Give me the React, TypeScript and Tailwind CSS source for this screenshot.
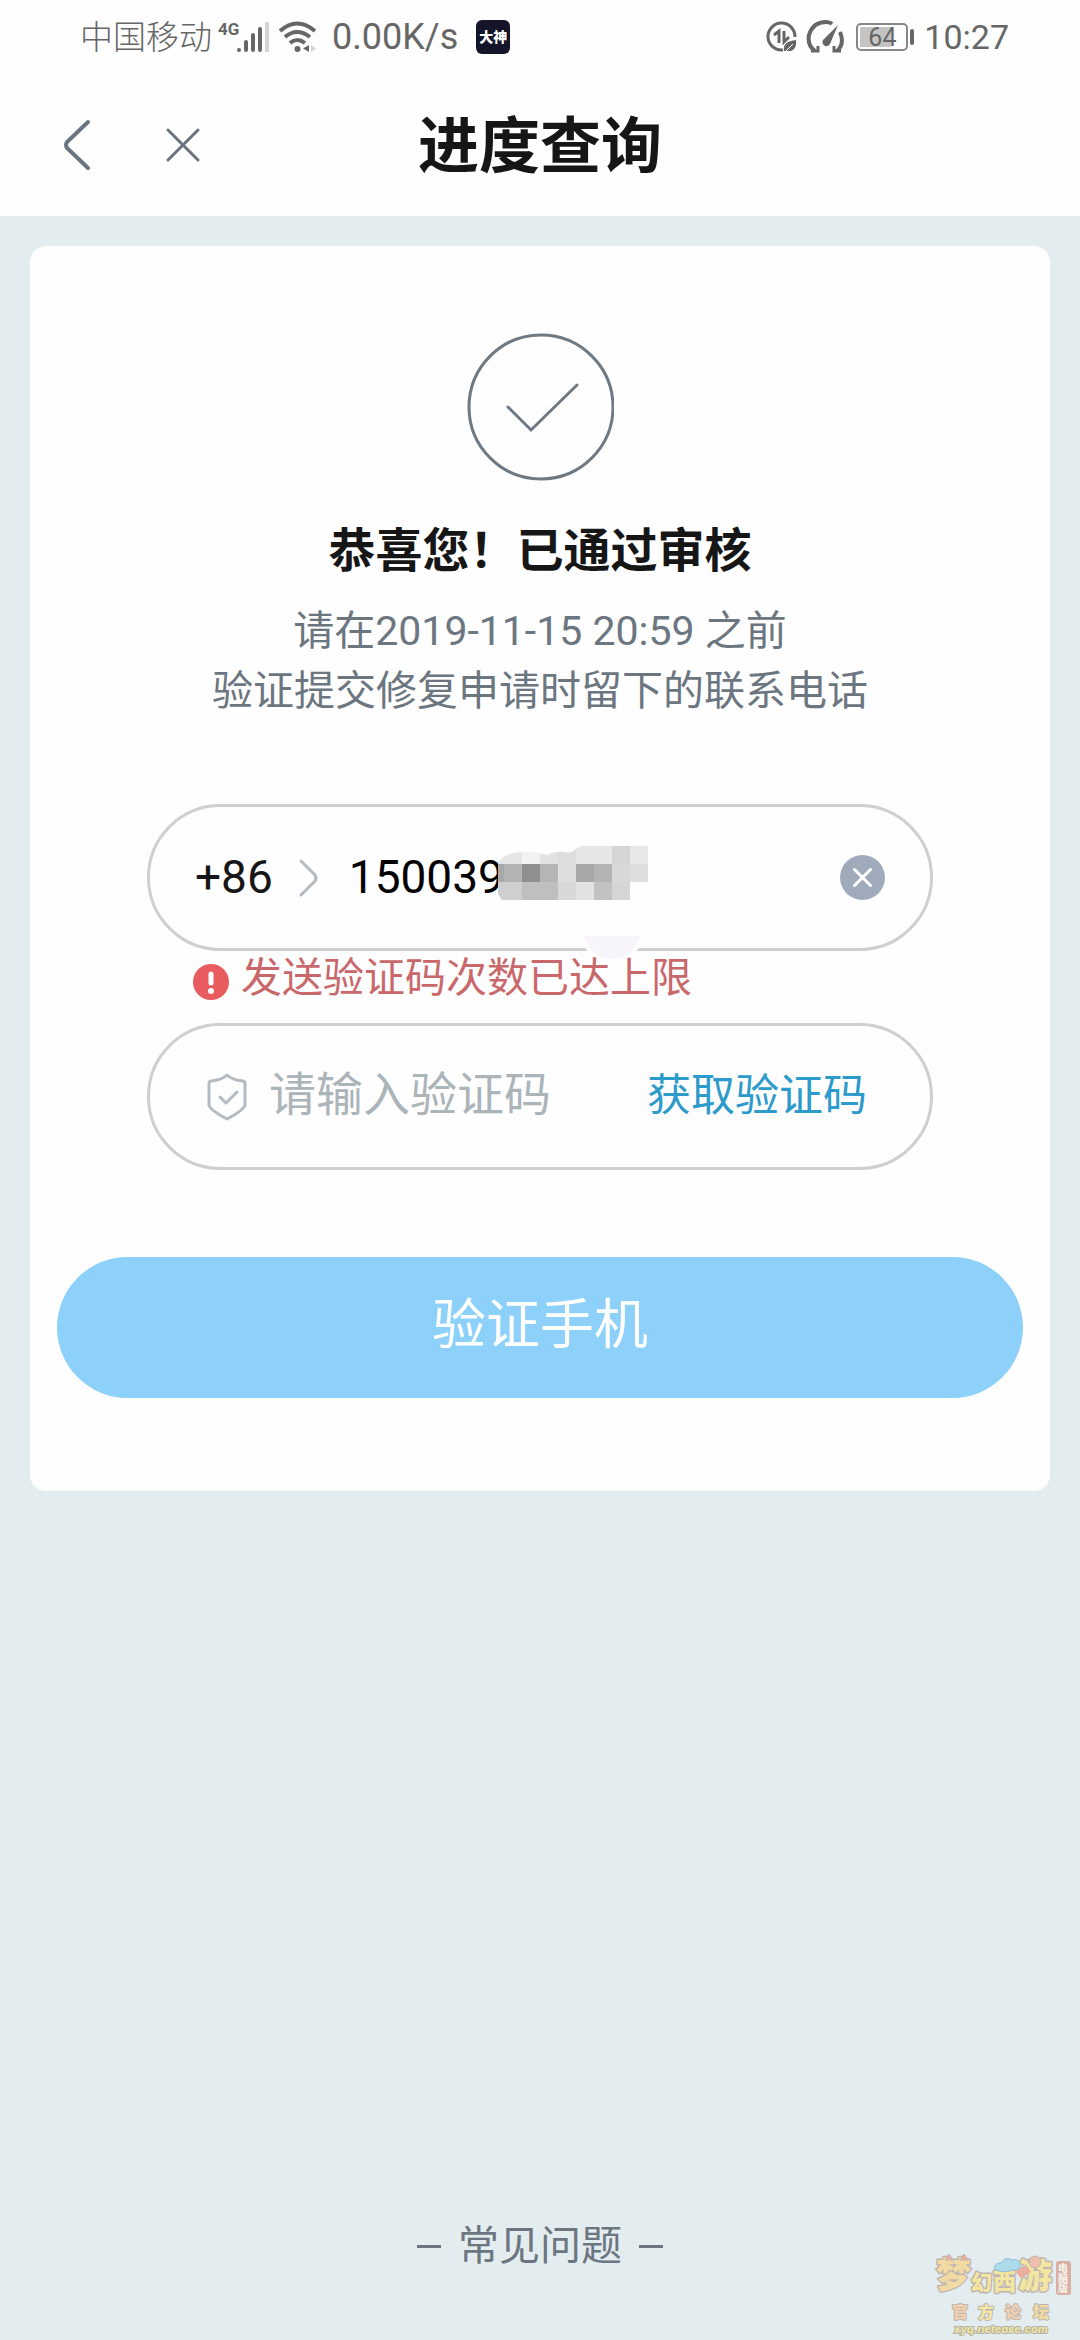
import React, { useState } from 'react';

const MOSAIC = [
  ['#e6e6e6', '#e6e6e6', '#f2f2f2', '#e2e2e2', '#dddddd', '#e6e6e6', '#e6e6e6', '#d5d5d5', '#e8e8e8'],
  ['#a9a9a9', '#b4b4b4', '#8f8f8f', '#b5b5b5', '#dddddd', '#a8a8a8', '#b4b4b4', '#d8d8d8', '#dedede'],
  ['#cfcfcf', '#cfcfcf', '#bfbfbf', '#bfbfbf', '#d8d8d8', '#e2e2e2', '#c2c2c2', '#d5d5d5', 'none'],
];

const StatusBar: React.FC = () => (
  <div className="flex h-[74px] items-center justify-between pl-20 pr-[71px] text-[#666]">
    <div className="flex items-center">
      <span className="text-[33px] font-light leading-none">中国移动</span>
      <svg width="54" height="36" viewBox="0 0 54 36" className="ml-[6px]">
        <text x="0" y="16" fontSize="17" fontWeight="700" fontFamily="Roboto, sans-serif" fill="#666">4G</text>
        <circle cx="21" cy="31" r="2" fill="#666" />
        <path d="M28 23v8M35 16v15M42 10v21" stroke="#666" strokeWidth="4" strokeLinecap="round" />
        <path d="M49 3v30" stroke="#d4d4d4" strokeWidth="4" />
      </svg>
      <svg width="40" height="36" viewBox="0 0 40 36" className="ml-[6px]" fill="none" stroke="#666" strokeWidth="4">
        <path d="M2 12Q19 -3 37 12" />
        <path d="M7 18Q19 8 32 18" />
        <path d="M12 24Q19 18 27 24" />
        <circle cx="19.500" cy="30" r="3" fill="#666" stroke="none" />
        <path d="M31 26v7l-6-3.500z" fill="#666" stroke="none" />
        <path d="M33 26v7l5-3.500z" fill="#d4d4d4" stroke="none" />
      </svg>
      <span className="ml-[14px] text-[36px] leading-none">0.00K/s</span>
      <span className="ml-[18px] flex size-[34px] items-center justify-center rounded-md bg-[#15152a] text-[14px] font-black leading-none text-white">
        大神
      </span>
    </div>
    <div className="flex items-center">
      <svg width="32" height="34" viewBox="0 0 32 34" fill="none" stroke="#666" strokeWidth="3">
        <path d="M17 30A13.500 13.500 0 1 1 29 17" />
        <path d="M8 15l5-4v12M18 11v11l5-5" strokeWidth="3" />
        <path d="M18 31c-1-7 3-10 12-11c1 8-3 12-9 11z" fill="#666" stroke="none" />
        <path d="M18 33l9-9" stroke="#fff" strokeWidth="1" />
      </svg>
      <svg width="40" height="34" viewBox="0 0 40 34" className="ml-2" fill="none" stroke="#666" strokeWidth="4">
        <path d="M9 31Q1 25 3 15Q7 2 20 2Q24 2 26 4" />
        <path d="M34 12Q39 24 31 31" />
        <path d="M5 31h7v-5M35 31h-7v-5" strokeWidth="3" />
        <path d="M32 5L24 24a4 4 0 1 1-6-5z" fill="#666" stroke="none" />
      </svg>
      <span className="ml-[10px] flex h-[28px] w-[52px] items-center rounded-[5px] border-2 border-[#888] p-[2px]">
        <span className="flex h-full w-[31px] items-center bg-[#c4c4c4] pl-2 text-[25px] leading-none">64</span>
      </span>
      <span className="ml-[2px] h-4 w-1 rounded-sm bg-[#666]" />
      <span className="ml-[10px] text-[34px] leading-none">10:27</span>
    </div>
  </div>
);

const Header: React.FC = () => (
  <header className="grid h-[142px] grid-cols-[1fr_auto_1fr] items-center">
    <div className="flex items-center">
      <button aria-label="返回" className="ml-[60px]">
        <svg width="34" height="54" viewBox="0 0 34 54" fill="none" stroke="#6a747e" strokeWidth="4" strokeLinecap="round">
          <path d="M28 4L7 24Q5 27 7 30L28 50" />
        </svg>
      </button>
      <button aria-label="关闭" className="ml-[70px]">
        <svg width="38" height="38" viewBox="0 0 38 38" stroke="#6a747e" strokeWidth="3" strokeLinecap="round">
          <path d="M4 4L34 34M34 4L4 34" />
        </svg>
      </button>
    </div>
    <h1 className="pt-1 text-[61px] font-bold leading-none text-[#161616]">进度查询</h1>
  </header>
);

// forum logo in the bottom right corner
const Watermark: React.FC = () => (
  <svg
    width="140"
    height="100"
    viewBox="0 -16 140 100"
    className="absolute bottom-1 right-2 opacity-80"
    fontFamily="'Noto Sans CJK SC', sans-serif"
    fontWeight="900"
    strokeLinejoin="round"
  >
    <g fill="#f6e58e" stroke="#b9a9a0" strokeWidth="3" paintOrder="stroke">
      <text x="4" y="36" fontSize="35" fill="#f6d890">梦</text>
      <text x="39" y="38" fontSize="21">幻</text>
      <text x="61" y="38" fontSize="23">西</text>
      <text x="86" y="36" fontSize="34">游</text>
    </g>
    <path d="M13 8l4-6 4 6zM28 8l4-6 4 6z" fill="#eda08c" stroke="#b9a9a0" />
    <path d="M62 17q0-6 7-6q4-7 11-3q8-2 8 5q0 6-7 5q-10 4-19-1z" fill="#9fd8ec" stroke="#7fb4cc" />
    <circle cx="103" cy="10" r="6" fill="#f0b49b" stroke="#b9a9a0" />
    <path d="M84 19l11-5 4 6-11 6z" fill="#eda08c" />
    <rect x="124" y="9" width="15" height="34" rx="3" fill="#d9a08e" />
    <text x="131" y="11" fontSize="10" fill="#f8f0e8" style={{ writingMode: 'vertical-rl' }}>电脑版</text>
    <g fontSize="16" stroke="#b5aba2" strokeWidth="2" paintOrder="stroke">
      <text x="20" y="66" fill="#f6c9a0">官</text>
      <text x="46" y="66" fill="#f6e58e">方</text>
      <text x="73" y="66" fill="#f6c9a0">论</text>
      <text x="101" y="66" fill="#f6d890">坛</text>
    </g>
    <text
      x="22"
      y="81"
      fontSize="11"
      fontStyle="italic"
      fontWeight="700"
      fontFamily="Inter, sans-serif"
      fill="#f6e58e"
      stroke="#a8a294"
      strokeWidth="2"
      paintOrder="stroke"
    >
      xyq.netease.com
    </text>
  </svg>
);

export default function App() {
  const [phone, setPhone] = useState('150039');
  const [code, setCode] = useState('');

  return (
    <div className="relative flex min-h-screen flex-col bg-[#e3ecef] font-['Roboto','Noto_Sans_CJK_SC',sans-serif]">
      <div className="bg-[#fefefe]">
        <StatusBar />
        <Header />
      </div>

      <main className="mx-[30px] mt-[30px] flex flex-col rounded-2xl bg-[#fefefe] px-[27px] pb-[93px] pt-[87px]">
        {/* Result */}
        <svg width="148" height="148" viewBox="0 0 148 148" className="self-center" fill="none" stroke="#6f7983" strokeWidth="3">
          <circle cx="75" cy="74" r="72" />
          <path d="M42 74L65 97L111 52" strokeLinecap="round" />
        </svg>
        <h2 className="mt-[42px] text-center text-[47px] font-bold leading-[56px] text-[#161616]">恭喜您！已通过审核</h2>
        <p className="mt-[22px] text-center text-[41px] leading-[60px] text-[#6b7680]">
          请在2019-11-15 20:59 之前
          <br />
          验证提交修复申请时留下的联系电话
        </p>

        <form className="flex flex-col" onSubmit={(e) => e.preventDefault()}>
          {/* Phone */}
          <div className="relative mx-[90px] mt-[83px] flex h-[147px] items-center rounded-full border-[3px] border-[#cfcfcf] px-[45px] text-[46px]">
            <button type="button" className="flex items-center text-[#161616]">
              +86
              <svg width="24" height="40" viewBox="0 0 24 40" className="ml-6" fill="none" stroke="#b4bac0" strokeWidth="3" strokeLinecap="round">
                <path d="M4 3L18 17Q20 20 18 23L4 37" />
              </svg>
            </button>
            <input
              type="tel"
              aria-label="手机号"
              value={phone}
              onChange={(e) => setPhone(e.target.value)}
              className="ml-7 min-w-0 flex-1 bg-transparent text-black outline-none"
            />
            <button type="button" aria-label="清除" onClick={() => setPhone('')}>
              <svg width="45" height="45" viewBox="0 0 45 45">
                <circle cx="22.500" cy="22.500" r="22.500" fill="#9fabba" />
                <path d="M14.500 14.500l16 16M30.500 14.500l-16 16" stroke="#fff" strokeWidth="3" strokeLinecap="round" />
              </svg>
            </button>
            <svg width="150" height="114" viewBox="0 0 150 114" className="absolute left-[348px] top-[39px]">
              <clipPath id="smudge">
                <path d="M0 16Q10 6 22 6L38 6Q45 8 50 9Q56 5 68 6Q73 8 78 3L84 0H150V36H132V54H4L0 48Z" />
              </clipPath>
              <g clipPath="url(#smudge)">
                {MOSAIC.map((row, y) =>
                  row.map((fill, x) => (
                    <rect key={`${x}-${y}`} x={x === 0 ? 0 : x * 18 - 12} y={y * 18} width="18" height="18" fill={fill} />
                  ))
                )}
              </g>
              <path d="M80 84H148V92Q136 114 114 114Q92 114 80 92Z" fill="#fefefe" />
              <path d="M85 90H142Q134 113 114 113Q94 113 85 90Z" fill="#f7f5f9" />
            </svg>
          </div>

          {/* Error */}
          <p className="ml-[136px] flex h-[54px] items-center text-[41px] leading-none text-[#c9686b]">
            <svg width="36" height="36" viewBox="0 0 36 36" className="mr-3 mt-2">
              <circle cx="18" cy="18" r="18" fill="#e85c60" />
              <path d="M18 10v9" stroke="#fff" strokeWidth="5" strokeLinecap="round" />
              <circle cx="18" cy="27" r="3" fill="#fff" />
            </svg>
            发送验证码次数已达上限
          </p>

          {/* Code */}
          <div className="mx-[90px] mt-[18px] flex h-[147px] items-center rounded-full border-[3px] border-[#cfcfcf] pl-[57px] pr-[63px]">
            <svg width="40" height="48" viewBox="0 0 40 48" fill="none" stroke="#b3bac1" strokeWidth="3" strokeLinecap="round" strokeLinejoin="round">
              <path d="M20 2Q25 7 36 8Q38 8 38 11V32Q37 37 20 46Q3 37 2 32V11Q2 8 4 8Q15 7 20 2Z" />
              <path d="M13 24L19 30L30 19" />
            </svg>
            <input
              type="text"
              aria-label="验证码"
              placeholder="请输入验证码"
              value={code}
              onChange={(e) => setCode(e.target.value)}
              className="ml-[22px] min-w-0 flex-1 bg-transparent pb-[2px] text-[47px] text-[#161616] outline-none placeholder:text-[#abb4b9]"
            />
            <button type="button" className="pb-[2px] text-[44px] text-[#2c9acb]">
              获取验证码
            </button>
          </div>

          <button type="submit" className="mt-[87px] h-[141px] rounded-full bg-[#8dd0f9] pb-1 text-[54px] text-white">
            验证手机
          </button>
        </form>
      </main>

      <footer className="mt-auto flex justify-center pb-16">
        <a href="#faq" className="flex items-center gap-[17px] text-[41px] leading-[60px] text-[#6b7680]">
          <span className="h-[3px] w-6 bg-[#6b7680]" />
          常见问题
          <span className="h-[3px] w-6 bg-[#6b7680]" />
        </a>
      </footer>
      <Watermark />
    </div>
  );
}
